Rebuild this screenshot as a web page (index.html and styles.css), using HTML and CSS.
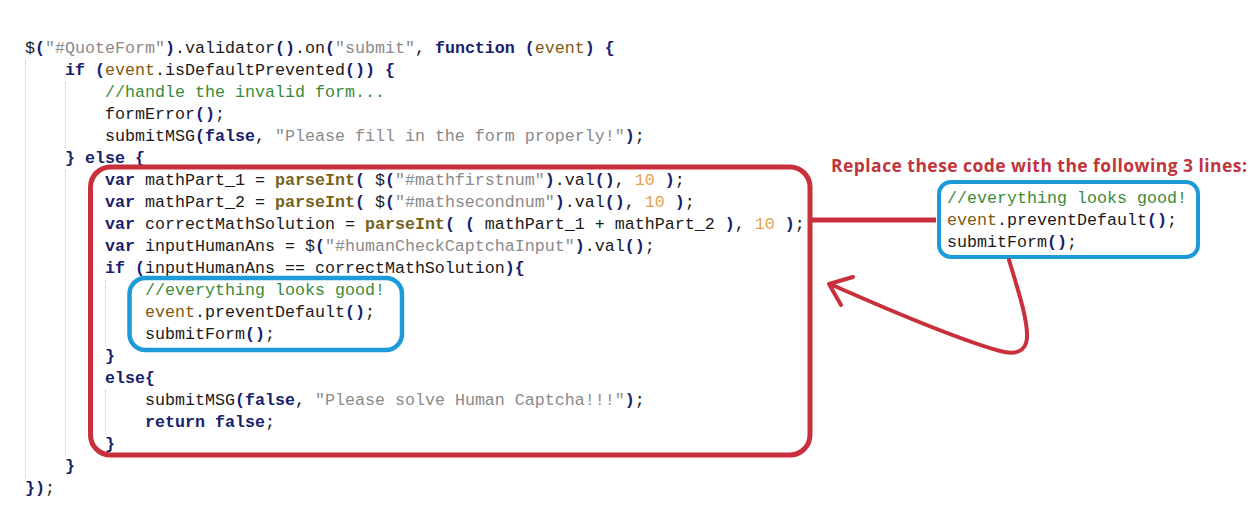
FILE: index.html
```html
<!DOCTYPE html>
<html lang="en">
<head>
<meta charset="utf-8">
<title>Code annotation</title>
<link rel="stylesheet" href="styles.css">
</head>
<body>
<div class="page">
  <div class="code">
    <div class="ln">$<b class="p">(</b><span class="s">"#QuoteForm"</span><b class="p">)</b>.validator<b class="p">()</b>.on<b class="p">(</b><span class="s">"submit"</span>, <b class="k">function</b> <b class="p">(</b><span class="v">event</span><b class="p">)</b> <b class="p">{</b></div>
    <div class="blk">
      <div class="ln"><b class="k">if</b> <b class="p">(</b><span class="v">event</span>.isDefaultPrevented<b class="p">())</b> <b class="p">{</b></div>
      <div class="blk">
        <div class="ln"><span class="c">//handle the invalid form...</span></div>
        <div class="ln">formError<b class="p">()</b>;</div>
        <div class="ln">submitMSG<b class="p">(</b><b class="k">false</b>, <span class="s">"Please fill in the form properly!"</span><b class="p">)</b>;</div>
      </div>
      <div class="ln"><b class="p">}</b> <b class="k">else</b> <b class="p">{</b></div>
      <div class="blk">
        <div class="ln"><b class="k">var</b> mathPart_1 = <b class="f">parseInt</b><b class="p">(</b> $<b class="p">(</b><span class="s">"#mathfirstnum"</span><b class="p">)</b>.val<b class="p">()</b>, <span class="n">10</span> <b class="p">)</b>;</div>
        <div class="ln"><b class="k">var</b> mathPart_2 = <b class="f">parseInt</b><b class="p">(</b> $<b class="p">(</b><span class="s">"#mathsecondnum"</span><b class="p">)</b>.val<b class="p">()</b>, <span class="n">10</span> <b class="p">)</b>;</div>
        <div class="ln"><b class="k">var</b> correctMathSolution = <b class="f">parseInt</b><b class="p">(</b> <b class="p">(</b> mathPart_1 + mathPart_2 <b class="p">)</b>, <span class="n">10</span> <b class="p">)</b>;</div>
        <div class="ln"><b class="k">var</b> inputHumanAns = $<b class="p">(</b><span class="s">"#humanCheckCaptchaInput"</span><b class="p">)</b>.val<b class="p">()</b>;</div>
        <div class="ln"><b class="k">if</b> <b class="p">(</b>inputHumanAns == correctMathSolution<b class="p">){</b></div>
        <div class="blk">
          <div class="ln"><span class="c">//everything looks good!</span></div>
          <div class="ln"><span class="v">event</span>.preventDefault<b class="p">()</b>;</div>
          <div class="ln">submitForm<b class="p">()</b>;</div>
        </div>
        <div class="ln"><b class="p">}</b></div>
        <div class="ln"><b class="k">else</b><b class="p">{</b></div>
        <div class="blk">
          <div class="ln">submitMSG<b class="p">(</b><b class="k">false</b>, <span class="s">"Please solve Human Captcha!!!"</span><b class="p">)</b>;</div>
          <div class="ln"><b class="k">return</b> <b class="k">false</b>;</div>
        </div>
        <div class="ln"><b class="p">}</b></div>
      </div>
      <div class="ln"><b class="p">}</b></div>
    </div>
    <div class="ln"><b class="p">})</b>;</div>
  </div>

  <div class="aside">
    <h2 class="note">Replace these code with the following 3 lines:</h2>
    <div class="snippet">
      <div class="ln"><span class="c">//everything looks good!</span></div>
      <div class="ln"><span class="v">event</span>.preventDefault<b class="p">()</b>;</div>
      <div class="ln">submitForm<b class="p">()</b>;</div>
    </div>
  </div>

  <svg class="marks" width="1254" height="517" viewBox="0 0 1254 517" aria-hidden="true">
    <rect class="red" x="90.5" y="167" width="719.5" height="288" rx="20" ry="20"/>
    <rect class="blue" x="129.5" y="278" width="272.5" height="72" rx="16" ry="16"/>
    <path class="red" d="M812 220 H936"/>
    <path class="red thin" d="M1009 260 C1018 290 1028 320 1027 338 C1026 352 1015 355 1000 351 C960 340 900 315 830 284"/>
    <path class="red thin" d="M853 277 L829 284 L841 305"/>
  </svg>
</div>
</body>
</html>
```

FILE: styles.css
```css
html, body {
  margin: 0;
  padding: 0;
  background: #ffffff;
}

.page {
  position: relative;
  width: 1254px;
  height: 517px;
  overflow: hidden;
  display: flex;
  align-items: flex-start;
}

.code {
  box-sizing: border-box;
  width: 831px;
  flex: none;
  padding: 38px 0 0 25px;
  font-family: "Liberation Mono", "Courier New", monospace;
  font-size: 16.667px;
  line-height: 22px;
  color: #1a1a1a;
}

.ln {
  white-space: pre;
  height: 22px;
}

.blk {
  border-left: 1px dotted #c4c4c4;
  padding-left: 39px;
}

b {
  font-weight: bold;
}

.k, .p {
  color: #18216c;
  font-weight: bold;
}

.s {
  color: #8a8a8a;
}

.n {
  color: #e3a14e;
}

.c {
  color: #3b8a3b;
}

.v {
  color: #7c5a14;
}

.f {
  color: #76621a;
  font-weight: bold;
}

.aside {
  flex: none;
  padding-top: 155px;
}

.note {
  margin: 0;
  font-family: "Open Sans", "Liberation Sans", sans-serif;
  font-size: 17.5px;
  line-height: 21px;
  font-weight: 700;
  color: #c0353b;
  white-space: nowrap;
  letter-spacing: 0.45px;
}

.snippet {
  margin: 4px 0 0 106px;
  box-sizing: border-box;
  width: 263px;
  padding: 4px 6px 1px;
  border: 4px solid #1d9bd8;
  border-radius: 14px;
  font-family: "Liberation Mono", "Courier New", monospace;
  font-size: 16.667px;
  line-height: 22px;
  color: #1a1a1a;
}

.marks {
  position: absolute;
  left: 0;
  top: 0;
  pointer-events: none;
}

.marks .red {
  fill: none;
  stroke: #c9303b;
  stroke-width: 5;
}

.marks .thin {
  stroke-width: 4;
  stroke-linecap: round;
  stroke-linejoin: round;
}

.marks .blue {
  fill: none;
  stroke: #1d9bd8;
  stroke-width: 4.5;
}
```
